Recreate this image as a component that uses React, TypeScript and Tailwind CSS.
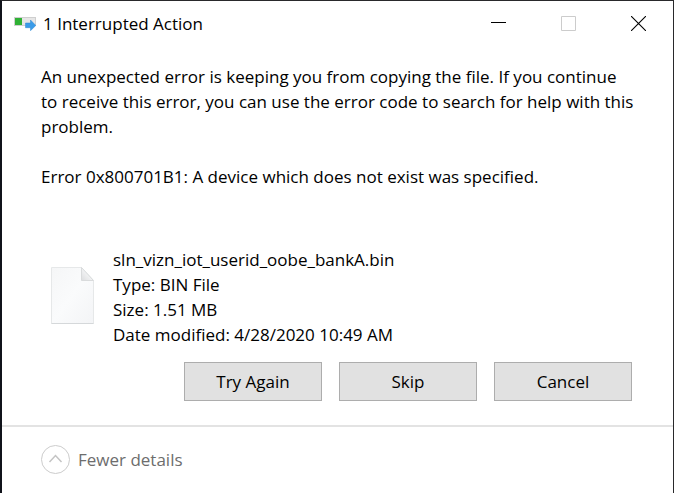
import React from "react";

const DETAILS = [
  "sln_vizn_iot_userid_oobe_bankA.bin",
  "Type: BIN File",
  "Size: 1.51 MB",
  "Date modified: 4/28/2020 10:49 AM",
];

const ACTIONS = ["Try Again", "Skip", "Cancel"];

const CopyIcon = () => (
  <svg width="22" height="16" viewBox="0 0 22 16" aria-hidden="true">
    <rect x="0.5" y="2.5" width="21" height="8" fill="#e6e6e6" stroke="#cfcfcf" />
    <rect x="1" y="3" width="7" height="7" fill="#2fb135" />
    <path
      d="M11.5 8h5V5l5.3 5.5-5.3 5.2v-3h-5z"
      fill="#3a9be8"
      stroke="#2f86d0"
      strokeWidth="0.5"
    />
  </svg>
);

const FileIcon = () => (
  <svg className="mt-5" width="43" height="57" viewBox="0 0 43 57" aria-hidden="true">
    <defs>
      <linearGradient id="page" x1="0" y1="0" x2="1" y2="1">
        <stop offset="0" stopColor="#f5f6f7" />
        <stop offset="0.5" stopColor="#fafbfc" />
        <stop offset="1" stopColor="#f3f4f6" />
      </linearGradient>
      <linearGradient id="fold" x1="0" y1="1" x2="1" y2="0">
        <stop offset="0" stopColor="#dcdddf" />
        <stop offset="0.5" stopColor="#f1f2f3" />
      </linearGradient>
    </defs>
    <path d="M0.5 0.5h30l12 13v43h-42z" fill="url(#page)" stroke="#e6e8e9" />
    <path d="M30.5 0.5v13h12z" fill="url(#fold)" stroke="#d9dbdc" />
    <path d="M0.5 56.5h42" stroke="#d5d8da" />
  </svg>
);

const TitleBar = () => {
  return (
    <header className="flex h-11 items-center">
      <div className="flex flex-1 items-center gap-[7px] pl-3">
        <CopyIcon />
        <h1>1 Interrupted Action</h1>
      </div>
      <button aria-label="Minimize" className="flex h-11 w-[70px] items-center justify-center">
        <svg width="15" height="15" viewBox="0 0 15 15">
          <path d="M0 6.5h15" stroke="#000" />
        </svg>
      </button>
      <button
        aria-label="Maximize"
        disabled
        className="flex h-11 w-[70px] items-center justify-center"
      >
        <svg width="15" height="15" viewBox="0 0 15 15">
          <path d="M0.5 0.5h14v14h-14z" fill="none" stroke="#cccccc" />
        </svg>
      </button>
      <button aria-label="Close" className="flex h-11 w-[70px] items-center justify-center">
        <svg width="15" height="15" viewBox="0 0 15 15">
          <path d="M0 0l15 15M15 0L0 15" stroke="#000" strokeWidth="1.1" />
        </svg>
      </button>
    </header>
  );
};

const App = () => {
  return (
    <div className="flex min-h-screen flex-col border-t border-r border-l-2 border-t-[#29292b] border-r-[#29292b] border-l-[#10131a] bg-white font-['Open_Sans','Noto_Sans',sans-serif] text-[17px] leading-[25px] text-black">
      <TitleBar />
      <main className="pt-[19px] pb-6 pl-[39px]">
        <div className="pr-6">
          <p>
            An unexpected error is keeping you from copying the file. If you continue
            <br />
            to receive this error, you can use the error code to search for help with this
            problem.
          </p>
          <p className="pt-[25px]">
            Error 0x800701B1: A device which does not exist was specified.
          </p>
        </div>
        <div className="flex items-start gap-[19px] pt-[58px] pl-[10px]">
          <FileIcon />
          <ul>
            {DETAILS.map((line) => (
              <li key={line}>{line}</li>
            ))}
          </ul>
        </div>
        <div className="flex justify-end gap-[17px] pt-[15px] pr-[41px]">
          {ACTIONS.map((action) => (
            <button
              key={action}
              className="h-[39px] w-[138px] border border-[#adadad] bg-[#e1e1e1]"
            >
              {action}
            </button>
          ))}
        </div>
      </main>
      <footer className="flex-1 border-t-2 border-[#e3e3e3] px-[39px] py-[18px]">
        <button className="flex items-center gap-2 text-[#6d6d6d]">
          <svg width="29" height="29" viewBox="0 0 29 29" fill="none" aria-hidden="true">
            <circle cx="14.5" cy="14.5" r="14" stroke="#cccccc" />
            <path d="M8.5 17l6-6.5 6 6.5" stroke="#c4c4c4" strokeWidth="1.5" />
          </svg>
          Fewer details
        </button>
      </footer>
    </div>
  );
};

export default App;
